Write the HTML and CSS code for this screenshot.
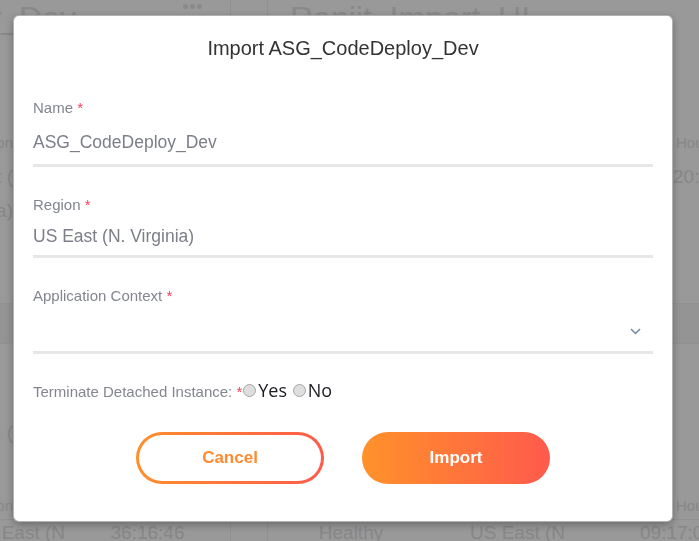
FILE: index.html
```html
<!DOCTYPE html>
<html lang="en">
<head>
<meta charset="utf-8">
<title>Import ASG_CodeDeploy_Dev</title>
<link rel="stylesheet" href="styles.css">
</head>
<body>
<div class="page">
  <div class="bg-top">
    <div class="bg-head bg-head-left">
      <div class="bg-clip-end"><span class="bg-title">ASG_CodeDeploy_Dev</span></div>
      <span class="bg-dots"><i></i><i></i><i></i></span>
    </div>
    <div class="bg-gap"></div>
    <div class="bg-head bg-head-right"><span class="bg-title">Ranjit_Import_UI</span></div>
  </div>
  <div class="bg-body">
    <div class="bg-row bg-row-a">
      <div class="bg-clip-end">Region</div><div></div><div class="bg-side">Hours</div>
    </div>
    <div class="bg-row bg-row-b">
      <div class="bg-clip-end">US East (</div><div></div><div class="bg-side big">20:05</div>
    </div>
    <div class="bg-row bg-row-c">
      <div class="bg-clip-end">Virginia)</div><div></div><div></div>
    </div>
    <div class="bg-band"></div>
    <div class="bg-row bg-row-d">
      <div class="bg-clip-end">Region: (</div><div></div><div></div>
    </div>
    <div class="bg-row bg-row-e">
      <div class="bg-clip-end">Region</div><div></div><div class="bg-side">Hours</div>
    </div>
    <div class="bg-table-row">
      <div class="bg-clip-end">US East (N</div>
      <div class="cell-center">36:16:46</div>
      <div class="bg-gap"></div>
      <div class="cell-center">Healthy</div>
      <div class="cell-left">US East (N</div>
      <div class="cell-left">09:17:02</div>
    </div>
  </div>
</div>

<div class="overlay">
  <div class="modal" role="dialog" aria-labelledby="modal-title">
    <h4 class="modal-title" id="modal-title">Import ASG_CodeDeploy_Dev</h4>
    <div class="modal-body">
      <div class="field field-first">
        <div class="field-label">Name <span class="req">*</span></div>
        <div class="field-value field-value-input">ASG_CodeDeploy_Dev</div>
      </div>
      <div class="field">
        <div class="field-label">Region <span class="req">*</span></div>
        <div class="field-value field-value-text">US East (N. Virginia)</div>
      </div>
      <div class="field">
        <div class="field-label">Application Context <span class="req">*</span></div>
        <div class="field-select">
          <svg class="chevron" width="11" height="7" viewBox="0 0 11 7" aria-hidden="true">
            <path d="M1 1 L5.5 5.5 L10 1" fill="none" stroke="#6f86a6" stroke-width="1.5"/>
          </svg>
        </div>
      </div>
      <div class="radio-row">
        <span class="radio-label">Terminate Detached Instance: <span class="req">*</span></span><input type="radio" name="term" class="radio"><span class="radio-text">Yes</span> <input type="radio" name="term" class="radio"><span class="radio-text">No</span>
      </div>
      <div class="actions">
        <button class="btn btn-outline" type="button">Cancel</button>
        <button class="btn btn-fill" type="button">Import</button>
      </div>
    </div>
  </div>
</div>
</body>
</html>
```

FILE: styles.css
```css
html, body {
  margin: 0;
  padding: 0;
}

body {
  width: 699px;
  height: 541px;
  overflow: hidden;
  font-family: "Liberation Sans", Arial, sans-serif;
  background: #ffffff;
}

/* ---------- underlying page (dimmed by overlay) ---------- */
.page {
  height: 541px;
  display: flex;
  flex-direction: column;
  color: #e2e2e2;
}

.bg-top {
  display: grid;
  grid-template-columns: 230px 38px 1fr;
  height: 100px;
  flex-shrink: 0;
}

.bg-gap {
  border-left: 1px solid #f0f0f0;
  border-right: 1px solid #f0f0f0;
  background: #fff;
}

.bg-head {
  display: flex;
  align-items: flex-start;
}

.bg-title {
  font-size: 32px;
  line-height: 37px;
  white-space: nowrap;
  color: #e4e4e4;
}

.bg-head-left .bg-clip-end {
  width: 76px;
}

.bg-clip-end {
  display: flex;
  justify-content: flex-end;
  overflow: hidden;
  white-space: nowrap;
}

.bg-dots {
  display: flex;
  gap: 2px;
  margin: 4px 0 0 107px;
}

.bg-dots i {
  width: 5px;
  height: 5px;
  border-radius: 50%;
  background: #e6e6e6;
}

.bg-head-right {
  padding-left: 22px;
}

.bg-body {
  display: flex;
  flex-direction: column;
  flex-shrink: 0;
}

.bg-row {
  display: grid;
  grid-template-columns: 13px 1fr 26px;
  white-space: nowrap;
}

.bg-side {
  overflow: hidden;
  padding-left: 3px;
}

.bg-row-a {
  margin-top: 34px;
  font-size: 15px;
  line-height: 18px;
}

.bg-row-b {
  margin-top: 14px;
  font-size: 19px;
  line-height: 22px;
}

.bg-row-b .bg-side.big {
  padding-left: 0;
  font-size: 19px;
}

.bg-row-c {
  margin-top: 12px;
  font-size: 19px;
  line-height: 22px;
}

.bg-band {
  margin-top: 81px;
  height: 39px;
  background: #f7f7f7;
  border-top: 1px solid #f2f2f2;
  border-bottom: 1px solid #f2f2f2;
}

.bg-row-d {
  margin-top: 78px;
  font-size: 19px;
  line-height: 22px;
}

.bg-row-e {
  margin-top: 53px;
  font-size: 15px;
  line-height: 18px;
}

.bg-table-row {
  margin-top: 4px;
  display: grid;
  grid-template-columns: 65px 165px 38px 166px 170px 1fr;
  font-size: 19px;
  line-height: 22px;
  white-space: nowrap;
  border-top: 1px solid #f2f2f2;
  padding-top: 2px;
}

.cell-center {
  text-align: center;
  overflow: hidden;
}

.cell-left {
  padding-left: 36px;
  overflow: hidden;
}

/* ---------- overlay + modal ---------- */
.overlay {
  position: fixed;
  inset: 0;
  background: rgba(0, 0, 0, 0.4);
  display: flex;
  align-items: flex-start;
  padding: 15px 0 0 13px;
}

.modal {
  width: 660px;
  height: 507px;
  box-sizing: border-box;
  background: #ffffff;
  border: 1px solid rgba(0, 0, 0, 0.3);
  border-radius: 6px;
  box-shadow: 0 3px 9px rgba(0, 0, 0, 0.3);
  display: flex;
  flex-direction: column;
}

.modal-title {
  margin: 0;
  padding-top: 21px;
  font-size: 20px;
  line-height: 23px;
  font-weight: normal;
  text-align: center;
  color: #333333;
}

.modal-body {
  padding: 0 19px;
}

.field {
  margin-top: 29px;
  border-bottom: 3px solid #e7e7e7;
}

.field-first {
  margin-top: 39px;
}

.field-label {
  font-size: 15px;
  line-height: 18px;
  color: #83868f;
}

.req {
  color: #ff3d5c;
}

.field-value {
  font-size: 17.5px;
  line-height: 22px;
  color: #7c7f88;
}

.field-value-input {
  margin-top: 14px;
  padding-bottom: 11px;
}

.field-value-text {
  margin-top: 11px;
  padding-bottom: 8px;
}

.field-select {
  height: 46px;
  box-sizing: border-box;
  display: flex;
  align-items: flex-end;
  justify-content: flex-end;
  padding: 0 12px 16px 0;
}

.chevron {
  display: block;
}

.radio-row {
  margin-top: 24px;
  line-height: 24px;
  white-space: nowrap;
  font-family: "Open Sans", sans-serif;
  font-size: 18px;
  color: #1b1b22;
}

.radio-label {
  font-family: "Liberation Sans", Arial, sans-serif;
  font-size: 15px;
  color: #83868f;
}

.radio {
  -webkit-appearance: none;
  appearance: none;
  width: 13px;
  height: 13px;
  margin: 0 2px 0 1px;
  box-sizing: border-box;
  border: 1px solid #a6a6a6;
  border-radius: 50%;
  background: #dedede;
  vertical-align: baseline;
}

.radio-text {
  font-family: "Open Sans", sans-serif;
}

.actions {
  margin-top: 28px;
  display: flex;
  justify-content: center;
  gap: 38px;
}

.btn {
  width: 188px;
  height: 52px;
  box-sizing: border-box;
  border-radius: 26px;
  font-family: "Liberation Sans", Arial, sans-serif;
  font-size: 17px;
  font-weight: bold;
  cursor: pointer;
  padding: 0;
}

.btn-outline {
  border: 3px solid transparent;
  background:
    linear-gradient(#ffffff, #ffffff) padding-box,
    linear-gradient(90deg, #ff8f2b, #ff5b4b) border-box;
  color: #ff8a30;
}

.btn-fill {
  border: 0;
  background: linear-gradient(90deg, #ff922a, #ff5a4c);
  color: #ffffff;
}
```
